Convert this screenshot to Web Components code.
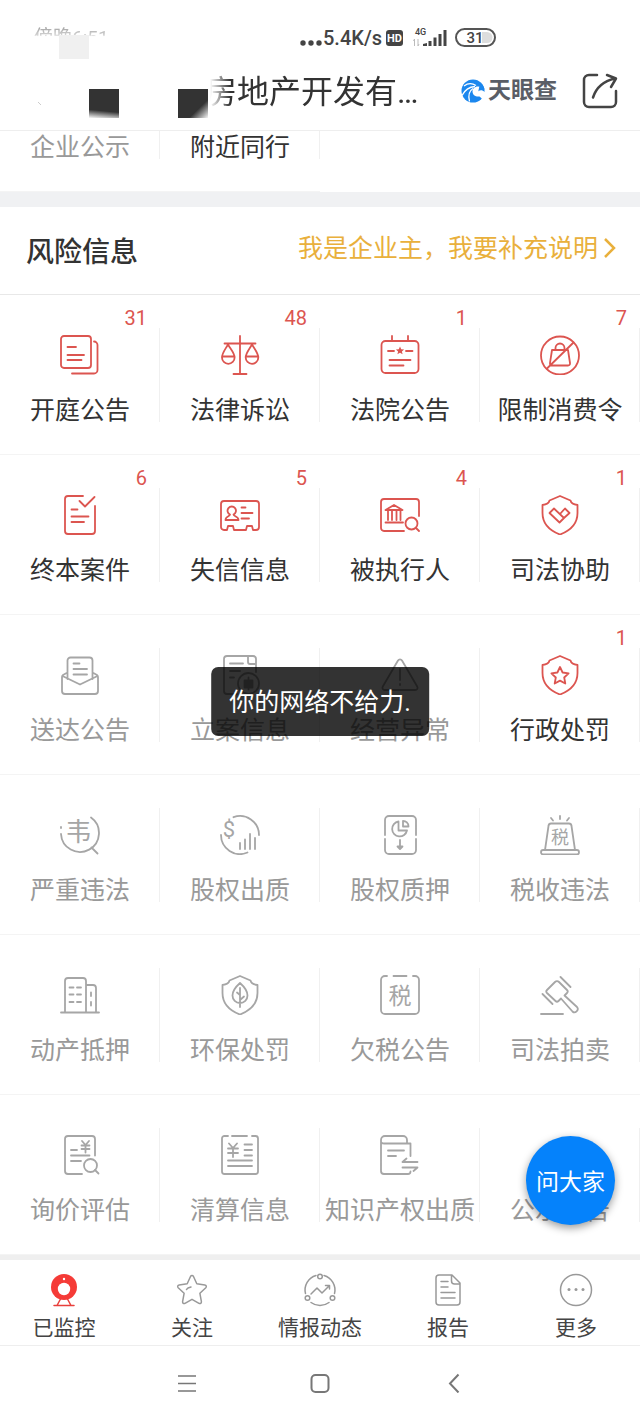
<!DOCTYPE html>
<html lang="zh-CN">
<head>
<meta charset="utf-8">
<meta name="viewport" content="width=device-width, initial-scale=1">
<title>风险信息</title>
<style>
  html, body { margin: 0; background: #fff; }
  body {
    font-family: Roboto, "Noto Sans CJK SC", sans-serif;
    color: #333;
    --red: #dc5550;
    --grey: #999;
    --line: #f0f0f0;
  }
</style>
</head>
<body>
<company-page></company-page>

<script>
const shield = '<path d="M20 1 9.500 5.500C9 8 7 9.500 2.500 10v8c0 10 7 17.500 17.500 21.500C30.500 35.500 37.500 28 37.500 18v-8c-4.500-.5-6.500-2-7-4.500z"/>';
const glyph = (t, x, y, s) => `<text x="${x}" y="${y}" font-size="${s}" text-anchor="middle" fill="currentColor" stroke="none">${t}</text>`;

const ICONS = {
  hearing: '<rect x="1" y="1" width="30" height="32" rx="3"/><path d="M7.500 12H16M7.500 20H24M7.500 25H21.500M34 6.500a3.500 3.500 0 0 1 3.500 3.500v25a3.500 3.500 0 0 1-3.500 3.500H12"/>',
  scales: '<path d="M20 1v38M13.500 39h13M4.500 8.500h31M8 9.500C5.500 14 2 18 2 22.500a6.300 6.300 0 0 0 12.600 0C14.600 18 10.500 14 8 9.500zM2.500 21.500h12M32 9.500c-2.500 4.500-6.300 8.500-6.300 13a6.300 6.300 0 0 0 12.600 0C38.300 18 34.500 14 32 9.500zM26 21.500h12"/>',
  calendar: '<rect x="1.500" y="6" width="37" height="32" rx="4"/><path d="M12 1v5M28 1v5M8 16h6M26 16h6.500M9.500 25h21M9.500 30.500h14"/><path fill="currentColor" stroke="none" d="m20 11.500 1.200 2.700 2.900.3-2.200 1.900.7 2.900-2.600-1.500-2.600 1.500.7-2.900-2.200-1.900 2.900-.3z"/>',
  limit: '<circle cx="20" cy="20.500" r="19"/><path d="M7 33.500 33.500 7.500M12 15h16l2 13c.2 1.500-.5 2.500-2 2.500H12c-1.500 0-2.200-1-2-2.500zM15.500 15v-2a4.500 4.500 0 0 1 9 0v2"/>',
  closed: '<path d="M23 1H8a3 3 0 0 0-3 3v32a3 3 0 0 0 3 3h24a3 3 0 0 0 3-3V11M19.500 6l5.500 5.500L34.500 2M11.500 14.500h6M11.500 21.500h17M11.500 27H24"/>',
  idcard: '<path d="M4 6h32a3 3 0 0 1 3 3v23a3 3 0 0 1-3 3h-3l-1-4h-5l-1 4H14l-1-4H8l-1 4H4a3 3 0 0 1-3-3V9a3 3 0 0 1 3-3z"/><path d="M10 19.500a4.200 4.200 0 1 1 3.500 0c0 2 5 1.500 5 5.500H5.500c0-4 4.500-3.500 4.500-5.500zM21.500 12.500h4M21.500 18h11M21.500 23.500h7.500"/>',
  court: '<path d="M24 36H4a3 3 0 0 1-3-3V7a3 3 0 0 1 3-3h32a3 3 0 0 1 3 3v14M5.500 27.500H23M5.500 15 14 10l8.500 5zM8 16v9M12 16v9M16.500 16v9M20.500 16v9"/><circle cx="31.500" cy="28.500" r="6"/><path d="m36 33 3 3"/>',
  assist: shield + '<path d="m9.500 18 4.500-4.500L24 23l-4.500 4.500zM20 19l5-5.500 4.500 4.500-5.500 5"/>',
  mail: '<path d="M7.500 24V5.500a3 3 0 0 1 3-3h19a3 3 0 0 1 3 3V24M7.500 17.500 3 20c-.7.500-1 1-1 2v14a3 3 0 0 0 3 3h30a3 3 0 0 0 3-3V22c0-1-.3-1.500-1-2l-4.500-2.500M2.500 21 20 29.500 37.500 21M13.500 8.500h6M13.500 14H27M13.500 19.500H27"/>',
  filing: '<path d="M17 39H7a3 3 0 0 1-3-3V4a3 3 0 0 1 3-3h26a3 3 0 0 1 3 3v13M28 1v6a2 2 0 0 0 2 2h6M10 8.500h13M10 16h10M10 22.500h4"/><circle cx="28.500" cy="28.500" r="10.500"/><path fill="currentColor" d="M24.500 25.500h8v7h-8zM28.500 22.500v12"/>',
  warning: '<path d="M18 5.500 2.800 31.500c-1 1.800 0 3.500 2 3.500h30.400c2 0 3-1.700 2-3.500L22 5.500c-1-1.600-3-1.600-4 0zM20 14v11M20 29v1"/>',
  penalty: shield + '<path d="m20 12 2.600 5.500 6 .8-4.400 4.200 1.100 6-5.300-2.900-5.300 2.900 1.100-6-4.400-4.200 6-.8z"/>',
  violation: '<path d="M31 2.500A19 19 0 1 1 1 19M1 12v1M31.500 32.500l6 6"/>' + glyph('韦', 18.500, 26, 26),
  pledge: '<path d="M13.500 2.200A19 19 0 0 1 39 20M1 20a19 19 0 0 0 26.500 17.500M20 28v6M25 24.500V34M30 19v15M35 23v11"/>' + glyph('$', 9, 22, 22),
  stock: '<path d="M5 20V5a4 4 0 0 1 4-4h23a4 4 0 0 1 4 4v15M5 24v11a4 4 0 0 0 4 4h23a4 4 0 0 0 4-4V24M18.500 6.500a7.500 7.500 0 1 0 8.500 9h-8.500zM23 6v5.500h5.500C28.500 8 26 6 23 6zM20 25v8"/><path fill="currentColor" d="M17.500 31.500h5L20 34z"/>',
  siren: '<path d="M5 35 8.500 11c.2-1.700 1-2.500 2.500-2.500h18c1.500 0 2.300.8 2.500 2.500L35 35"/><rect x="1" y="35" width="38" height="4.500" rx="2.200"/><path d="M20 1v3M11 3l2 2.500M29 3l-2 2.500"/>' + glyph('税', 20, 29, 18),
  building: '<path d="M1 37.500h38M5 37.500V6a3 3 0 0 1 3-3h15a3 3 0 0 1 3 3v31.500M26 10h7a3 3 0 0 1 3 3v24.500M9.500 12.500h4M17 12.500h4M9.500 19.500h4M17 19.500h4M9.500 27h4M17 27h4M31 17.500V21M31 27v3.500"/>',
  leaf: shield + '<path d="M20 8c-4.500 4-7.500 8-7.500 12.500a7.500 7.500 0 0 0 15 0C27.500 16 24.500 12 20 8zM20 13v19M20 20l-3-2.500M20 25l4-3.500"/>',
  taxdue: '<path d="M7 1H5a4 4 0 0 0-4 4v30a4 4 0 0 0 4 4h30a4 4 0 0 0 4-4V5a4 4 0 0 0-4-4h-2M13.500 1h13"/>' + glyph('税', 20, 29, 23),
  gavel: '<path d="M15 7 7 15c-1 1-1 2 0 3l8.500 8c1 1 2 1 3 0l2.500-2.500 11.500 13c2.500 2.500 7-1.500 4.500-4.500L24.500 20.500l2.500-2.500c1-1 1-2 0-3l-8-8c-1.300-1.300-2.700-1.300-4 0zM20.500 2l10 10M2.500 19l10 10M1 39h22"/>',
  appraisal: '<path d="M22 39H8a3 3 0 0 1-3-3V4a3 3 0 0 1 3-3h24a3 3 0 0 1 3 3v16.500M11 15h6M11 20.500h18.500M11 26h10"/><circle cx="30.500" cy="30.500" r="6.500"/><path d="m35 35 3.500 3.500M22 6l3.500 4L29 6M21.500 10.500h8M21.500 14h8M25.500 10.500v7"/>',
  settle: '<path d="M8 1H4.500A2.500 2.500 0 0 0 2 3.500v33A2.500 2.500 0 0 0 4.500 39h31a2.500 2.500 0 0 0 2.500-2.500v-33A2.500 2.500 0 0 0 35.500 1H32M12 1h15M24.500 9.500H32M24.500 15H32M24.500 20.500H32M8 25.500h24M8 31h24M9 8.500l4 4.500 4-4.500M8 13.500h10M8 18h10M13 13v9"/>',
  ipr: '<path d="M27 8.500V5a4 4 0 0 0-4-4H5a4 4 0 0 0-4 4v31a3 3 0 0 0 3 3h24a2.500 2.500 0 0 0 2.500-2.500M1.500 7.500C2 8.500 3 8.500 4 8.500h26.500V21M8 15.500h16M8 21h8M37.500 27h-15l4-3.500M22.500 32.500h15l-4 3.500"/>',
  notice: '<circle cx="20" cy="20" r="13"/><path d="M14 17h12M14 23h8"/>'
};

const TAB_ICONS = {
  camera: '<g stroke="#e8403c"><path d="m12.500 25-3.500 6.500M19.500 25l3.500 6.500M6 31.500h20"/></g><circle cx="16" cy="13" r="13" fill="#f53b37" stroke="none"/><circle cx="16" cy="15" r="6.200" fill="#fff" stroke="none"/><circle cx="16" cy="5" r="1.200" fill="#fff" stroke="none"/>',
  star: '<path d="M14.500 2.500c.6-1.300 2.400-1.300 3 0l3.300 7.200 8 1.200c1.500.2 2 1.800 1 2.800l-5.900 5.600 1.500 8.300c.2 1.500-1.200 2.400-2.400 1.700L16 25.300l-7 4c-1.200.7-2.600-.2-2.400-1.700l1.500-8.300-5.900-5.600c-1-1-.5-2.600 1-2.800l8-1.200zM10.500 15.500l1.500-1.500 3-1"/>',
  activity: '<path d="M12 1.500A15 15 0 0 0 1.500 19.500M20 1.500a15 15 0 0 1 10.500 18M7 28.500a15 15 0 0 0 18 0M7 20l6-6 5 5 7-7M21.500 11.500h4V15"/><circle cx="16" cy="2.500" r="2.300"/><circle cx="3.500" cy="24" r="2.300"/><circle cx="28.500" cy="24" r="2.300"/>',
  report: '<path d="M20 1H7a3 3 0 0 0-3 3v24a3 3 0 0 0 3 3h18a3 3 0 0 0 3-3V9zM19.500 1v6a3 3 0 0 0 3 3H28M9 7.500h7M9 13h7M9 18.500h14M9 24h14"/>',
  more: '<circle cx="16" cy="16" r="15.500"/><g fill="currentColor" stroke="none"><circle cx="9" cy="15.500" r="1.500"/><circle cx="16" cy="15.500" r="1.500"/><circle cx="23" cy="15.500" r="1.500"/></g>'
};

class BaseElement extends HTMLElement {
  connectedCallback() {
    if (this.shadowRoot) return;
    this.attachShadow({ mode: 'open' }).innerHTML =
      '<style>*{box-sizing:border-box}svg{display:block;flex:none}button{font:inherit;color:inherit;background:none;border:0;padding:0;cursor:pointer}a{color:inherit;text-decoration:none}</style>' + this.render();
  }
}

customElements.define('status-bar', class extends BaseElement {
  render() {
    return `<style>
      :host { display: block; padding-top: 20px; }
      .bar { position: relative; display: flex; align-items: center; height: 36px; padding: 0 144px 0 34px; color: #444; line-height: 36px; }
      .time { font-size: 19px; color: #aaa; margin-right: auto;
        -webkit-mask-image: linear-gradient(#000 24%, rgba(0,0,0,.5) 42%, transparent 46%); mask-image: linear-gradient(#000 24%, rgba(0,0,0,.5) 42%, transparent 46%); }
      .patch { position: absolute; left: 59px; top: 15px; width: 30px; height: 24px; background: #f0f0f0; }
      .speed { font-size: 20px; font-weight: 500; margin: 0 4px 0 1px; }
      .signal { margin: 0 8px 0 9px; }
    </style>
    <div class="bar">
      <span class="time">傍晚6:51</span><span class="patch"></span>
      <svg width="22" height="16" fill="#444"><circle cx="3" cy="13" r="2.700"/><circle cx="11" cy="13" r="2.700"/><circle cx="19" cy="13" r="2.700"/></svg>
      <span class="speed">5.4K/s</span>
      <svg width="18" height="18"><rect y="1" width="17" height="16" rx="3" fill="#444"/><text x="8.500" y="13" font-size="11" font-weight="700" text-anchor="middle" fill="#fff">HD</text></svg>
      <svg class="signal" width="34" height="20" fill="#444"><text x="2" y="7" font-size="9" font-weight="500">4G</text><g><path d="M10 18v-2l4-1v3zM15.500 18v-5h3v5zM20.500 18V9.500h3V18zM25.500 18V6h3v12zM30.500 18V2h3v16z"/></g><path d="M1.500 11v7M1.500 11l-1 2M5 11v7M5 18l1-2" stroke="#bbb" fill="none"/></svg>
      <svg width="41" height="20"><path d="M27 4h5a5.500 5.500 0 0 1 0 11h-5z" fill="#ddd"/><rect x="1" y="1" width="39" height="17" rx="8.500" fill="none" stroke="#555" stroke-width="2"/><text x="20" y="15" font-size="15" font-weight="500" text-anchor="middle" fill="#444">31</text></svg>
    </div>`;
  }
});

customElements.define('app-header', class extends BaseElement {
  render() {
    return `<style>
      :host { display: flex; align-items: center; height: 75px; padding: 0 22px 4px 0; border-bottom: 1px solid #eee; }
      .cover { overflow: visible; }
      h1 { margin: 0 auto 0 0; padding-top: 2px; font-size: 32px; font-weight: 400; line-height: 40px; white-space: nowrap;
        -webkit-mask-image: linear-gradient(90deg, transparent 5px, #000 25px); mask-image: linear-gradient(90deg, transparent 5px, #000 25px); }
      a { display: flex; align-items: center; font-size: 23px; font-weight: 700; line-height: 32px; color: #5a5e66; margin-right: 25px; gap: 2px; }
    </style>
    <svg class="cover" width="205" height="70" viewBox="0 56 205 70">
      <defs>
        <linearGradient id="a" x1="0" y1="0" x2="-.1" y2="1"><stop offset=".7" stop-color="#333"/><stop offset="1" stop-color="#333" stop-opacity="0"/></linearGradient>
        <linearGradient id="b" x1="0" y1="0" x2="1" y2="1"><stop offset=".68" stop-color="#333"/><stop offset=".98" stop-color="#333" stop-opacity=".1"/></linearGradient>
      </defs>
      <path d="m38 102 3 3" stroke="#ccc"/>
      <rect x="89" y="89" width="30" height="29" fill="url(#a)"/><rect x="178" y="89" width="30" height="29" fill="url(#b)"/>
    </svg>
    <h1>房地产开发有…</h1>
    <a href="#"><svg width="25" height="24" viewBox="0 0 25 24"><circle cx="12" cy="12" r="11.500" fill="#1b87ee"/><path d="M25.500 14C24 10 21 7.500 17 7.500c-3.500 0-5.500 2.500-5.500 5 0 3.500 3 5.500 7 5l3.500 3 3.500-2z" fill="#fff"/><path d="M17 13.500c0-2.500 4.500-3 6.500-.5C24 9 22 6 19 4.500" fill="#1b87ee"/><path d="M3 7c4-3 8-3 12-.5M1 16.500C4 10.500 8 8 14 7.500M8.500 22.500C7 16.500 8 12 12 9.500" stroke="#fff" stroke-width="1.300" fill="none"/></svg>天眼查</a>
    <button aria-label="分享"><svg width="36" height="36" fill="none" stroke="#444" stroke-width="2.500" stroke-linecap="round" stroke-linejoin="round"><path d="M15 2H7a5 5 0 0 0-5 5v22a5 5 0 0 0 5 5h22a5 5 0 0 0 5-5V18M11 24.500C14 15 22 8 33 5.500M25 2l9 3.500-5 8.500"/></svg></button>`;
  }
});

customElements.define('risk-cell', class extends BaseElement {
  render() {
    const a = n => this.getAttribute(n) || '';
    const count = a('count'), icon = a('icon'), active = count || this.hasAttribute('active');
    return `<style>
      :host { display: block; position: relative; min-width: 0; }
      :host::after { content: ""; position: absolute; right: 0; top: 33px; bottom: 33px; width: 1px; background: var(--line); }
      :host([plain])::after { top: 0; }
      a { display: flex; flex-direction: column; align-items: center; padding: 40px 0 26px; border-bottom: 1px solid #f4f4f4; color: ${active ? '#333' : 'var(--grey)'}; }
      :host([plain]) a { padding: 0 0 26px; }
      svg { margin-bottom: 19px; color: ${active ? 'var(--red)' : '#a6a6a6'}; fill: none; stroke: currentColor; stroke-width: 1.800; stroke-linecap: round; stroke-linejoin: round; }
      .name { font-size: 25px; line-height: 34px; white-space: nowrap; }
      .count { position: absolute; right: 13px; top: 11px; font-size: 20px; line-height: 24px; color: var(--red); }
    </style>
    <a href="#">${icon ? `<svg width="40" height="40" viewBox="0 0 40 40">${ICONS[icon]}</svg>` : ''}<span class="name"><slot></slot></span>${count ? `<span class="count">${count}</span>` : ''}</a>`;
  }
});

customElements.define('cell-grid', class extends BaseElement {
  render() {
    return `<style>:host { display: grid; grid-template-columns: repeat(4, 1fr); }</style><slot></slot>`;
  }
});

customElements.define('section-head', class extends BaseElement {
  render() {
    return `<style>
      :host { display: flex; align-items: center; justify-content: space-between; height: 103px; padding: 0 24px 0 26px; border-top: 15px solid #f0f1f3; border-bottom: 1px solid #e8e8e8; }
      h2 { margin: 0; padding-top: 4px; font-size: 28px; font-weight: 500; line-height: 40px; }
      a { display: flex; align-items: center; gap: 5px; font-size: 25px; line-height: 34px; padding-bottom: 4px; color: #e9b03c; }
    </style>
    <h2><slot></slot></h2>
    <a href="#"><slot name="link"></slot><svg width="13" height="22" fill="none" stroke="currentColor" stroke-width="2.500"><path d="m2 1 9 9-9 9"/></svg></a>`;
  }
});

customElements.define('toast-message', class extends BaseElement {
  render() {
    return `<style>
      :host { position: absolute; left: 50%; top: 667px; transform: translateX(-50%); padding: 19px 18px 16px; border-radius: 7px; background: rgba(0,0,0,.8); color: #fff; font-size: 25px; line-height: 34px; white-space: nowrap; z-index: 2; }
    </style><span role="status"><slot></slot></span>`;
  }
});

customElements.define('ask-button', class extends BaseElement {
  render() {
    return `<style>
      :host { position: absolute; right: 25px; bottom: 30px; z-index: 1; }
      button { width: 89px; height: 89px; padding-bottom: 2px; border-radius: 50%; background: #0582fb; color: #fff; font-size: 23px; box-shadow: 0 3px 8px rgba(0,0,0,.4); }
    </style><button><slot></slot></button>`;
  }
});

customElements.define('tab-item', class extends BaseElement {
  render() {
    return `<style>
      :host { display: block; flex: 1; }
      button { display: flex; flex-direction: column; align-items: center; gap: 7px; width: 100%; padding: 14px 0 2px; font-size: 21px; line-height: 30px; color: #444; }
      svg { overflow: visible; color: #999; fill: none; stroke: currentColor; stroke-width: 1.500; stroke-linecap: round; stroke-linejoin: round; }
    </style>
    <button><svg width="32" height="32" viewBox="0 0 32 32">${TAB_ICONS[this.getAttribute('icon')]}</svg><slot></slot></button>`;
  }
});

customElements.define('tab-bar', class extends BaseElement {
  render() {
    return `<style>:host { display: flex; border-top: 5px solid #efefef; border-bottom: 1px solid #eee; }</style><slot></slot>`;
  }
});

customElements.define('system-nav', class extends BaseElement {
  render() {
    return `<style>
      :host { display: block; padding: 27px 0 29px; }
      div { display: flex; width: 63%; margin: 0 auto; }
      button { display: flex; flex: 1; justify-content: center; }
      svg { fill: none; stroke: #777; stroke-width: 2; }
    </style>
    <div>
      <button aria-label="菜单"><svg width="20" height="20"><path d="M2 3h18M2 10.500h18M2 18h18" stroke-width="1.500"/></svg></button>
      <button aria-label="主页"><svg width="20" height="20"><rect x="1.500" y="2" width="17" height="17" rx="4"/></svg></button>
      <button aria-label="返回"><svg width="20" height="20"><path d="M14.500 1.500 6 10.500l8.500 9"/></svg></button>
    </div>`;
  }
});

customElements.define('company-page', class extends BaseElement {
  render() {
    return `<style>
      :host { display: block; position: relative; background: #fff; }
      .risk { position: relative; }
    </style>
    <header><status-bar></status-bar><app-header></app-header></header>
    <main>
      <cell-grid>
        <risk-cell plain>企业公示</risk-cell>
        <risk-cell plain active>附近同行</risk-cell>
      </cell-grid>
      <section class="risk">
        <section-head>风险信息<span slot="link">我是企业主，我要补充说明</span></section-head>
        <cell-grid>
          <risk-cell icon="hearing" count="31">开庭公告</risk-cell>
          <risk-cell icon="scales" count="48">法律诉讼</risk-cell>
          <risk-cell icon="calendar" count="1">法院公告</risk-cell>
          <risk-cell icon="limit" count="7">限制消费令</risk-cell>
          <risk-cell icon="closed" count="6">终本案件</risk-cell>
          <risk-cell icon="idcard" count="5">失信信息</risk-cell>
          <risk-cell icon="court" count="4">被执行人</risk-cell>
          <risk-cell icon="assist" count="1">司法协助</risk-cell>
          <risk-cell icon="mail">送达公告</risk-cell>
          <risk-cell icon="filing">立案信息</risk-cell>
          <risk-cell icon="warning">经营异常</risk-cell>
          <risk-cell icon="penalty" count="1">行政处罚</risk-cell>
          <risk-cell icon="violation">严重违法</risk-cell>
          <risk-cell icon="pledge">股权出质</risk-cell>
          <risk-cell icon="stock">股权质押</risk-cell>
          <risk-cell icon="siren">税收违法</risk-cell>
          <risk-cell icon="building">动产抵押</risk-cell>
          <risk-cell icon="leaf">环保处罚</risk-cell>
          <risk-cell icon="taxdue">欠税公告</risk-cell>
          <risk-cell icon="gavel">司法拍卖</risk-cell>
          <risk-cell icon="appraisal">询价评估</risk-cell>
          <risk-cell icon="settle">清算信息</risk-cell>
          <risk-cell icon="ipr">知识产权出质</risk-cell>
          <risk-cell icon="notice">公示公告</risk-cell>
        </cell-grid>
        <ask-button>问大家</ask-button>
      </section>
    </main>
    <tab-bar>
      <tab-item icon="camera">已监控</tab-item>
      <tab-item icon="star">关注</tab-item>
      <tab-item icon="activity">情报动态</tab-item>
      <tab-item icon="report">报告</tab-item>
      <tab-item icon="more">更多</tab-item>
    </tab-bar>
    <system-nav></system-nav>
    <toast-message>你的网络不给力.</toast-message>`;
  }
});
</script>
</body>
</html>
